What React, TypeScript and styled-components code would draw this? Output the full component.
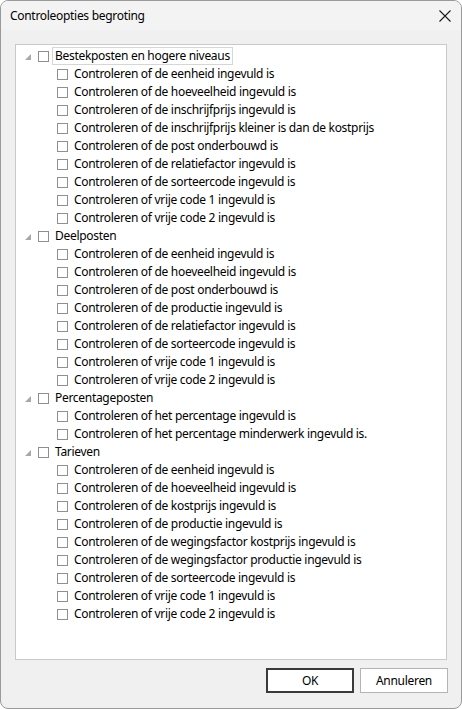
import React from "react";
import styled, { createGlobalStyle } from "styled-components";

const GlobalStyle = createGlobalStyle`
  html, body {
    margin: 0;
    padding: 0;
    background: #ffffff;
  }
  * {
    box-sizing: border-box;
  }
`;

interface TreeGroup {
  label: string;
  items: string[];
}

const groups: TreeGroup[] = [
  {
    label: "Bestekposten en hogere niveaus",
    items: [
      "Controleren of de eenheid ingevuld is",
      "Controleren of de hoeveelheid ingevuld is",
      "Controleren of de inschrijfprijs ingevuld is",
      "Controleren of de inschrijfprijs kleiner is dan de kostprijs",
      "Controleren of de post onderbouwd is",
      "Controleren of de relatiefactor ingevuld is",
      "Controleren of de sorteercode ingevuld is",
      "Controleren of vrije code 1 ingevuld is",
      "Controleren of vrije code 2 ingevuld is",
    ],
  },
  {
    label: "Deelposten",
    items: [
      "Controleren of de eenheid ingevuld is",
      "Controleren of de hoeveelheid ingevuld is",
      "Controleren of de post onderbouwd is",
      "Controleren of de productie ingevuld is",
      "Controleren of de relatiefactor ingevuld is",
      "Controleren of de sorteercode ingevuld is",
      "Controleren of vrije code 1 ingevuld is",
      "Controleren of vrije code 2 ingevuld is",
    ],
  },
  {
    label: "Percentageposten",
    items: [
      "Controleren of het percentage ingevuld is",
      "Controleren of het percentage minderwerk ingevuld is.",
    ],
  },
  {
    label: "Tarieven",
    items: [
      "Controleren of de eenheid ingevuld is",
      "Controleren of de hoeveelheid ingevuld is",
      "Controleren of de kostprijs ingevuld is",
      "Controleren of de productie ingevuld is",
      "Controleren of de wegingsfactor kostprijs ingevuld is",
      "Controleren of de wegingsfactor productie ingevuld is",
      "Controleren of de sorteercode ingevuld is",
      "Controleren of vrije code 1 ingevuld is",
      "Controleren of vrije code 2 ingevuld is",
    ],
  },
];

const DialogWindow = styled.div`
  width: 462px;
  height: 709px;
  display: flex;
  flex-direction: column;
  background: #f0f0f0;
  border: 1px solid #9a9a9a;
  border-radius: 8px;
  overflow: hidden;
  font-family: "Noto Sans", "Open Sans", sans-serif;
  font-size: 12px;
  letter-spacing: -0.3px;
  color: #000000;
`;

const TitleBar = styled.div`
  height: 29px;
  flex: none;
  display: flex;
  align-items: center;
  justify-content: space-between;
  padding: 1px 9px 0 9px;
  background: #f3f3f3;
`;

const TitleText = styled.span`
  font-size: 12px;
  line-height: 16px;
`;

const CloseButton = styled.button`
  width: 14px;
  height: 14px;
  padding: 0;
  margin: 0;
  border: none;
  background: transparent;
  display: flex;
  align-items: center;
  justify-content: center;
  cursor: pointer;
`;

const Body = styled.div`
  flex: 1;
  display: flex;
  flex-direction: column;
  padding: 14px 14px 0 14px;
`;

const TreePanel = styled.div`
  flex: 1;
  background: #ffffff;
  border: 1px solid #c9c9c9;
  padding-top: 2px;
`;

const Row = styled.div<{ $level: number }>`
  height: 18px;
  display: flex;
  align-items: center;
  padding-left: ${(p) => 8 + p.$level * 19}px;
  white-space: nowrap;
`;

const Expander = styled.span`
  width: 14px;
  height: 18px;
  flex: none;
  display: flex;
  align-items: center;
  padding-left: 1px;
  padding-top: 2px;
`;

const CheckBox = styled.span`
  width: 11px;
  height: 11px;
  flex: none;
  border: 1px solid #8f8f8f;
  background: #ffffff;
`;

const Label = styled.span<{ $focused?: boolean }>`
  margin-left: 3px;
  height: 18px;
  display: flex;
  align-items: center;
  padding: 0 2px;
  border: 1px solid ${(p) => (p.$focused ? "#d6d6d6" : "transparent")};
  line-height: 16px;
`;

const Footer = styled.div`
  height: 48px;
  flex: none;
  display: flex;
  justify-content: flex-end;
  align-items: flex-start;
  gap: 6px;
  padding: 8px 13px 0 0;
`;

const DialogButton = styled.button<{ $default?: boolean }>`
  width: 88px;
  height: 25px;
  padding: 0;
  background: #ffffff;
  border: ${(p) => (p.$default ? "2px solid #3a3a3a" : "1px solid #b4b4b4")};
  font-family: "Noto Sans", "Open Sans", sans-serif;
  font-size: 12px;
  letter-spacing: -0.3px;
  color: #000000;
  cursor: pointer;
`;

const ExpandedGlyph = () => (
  <svg width="6" height="6" viewBox="0 0 6 6">
    <polygon points="6,0 6,6 0,6" fill="#a8a8a8" />
  </svg>
);

const CloseGlyph = () => (
  <svg width="12" height="12" viewBox="0 0 12 12">
    <path d="M0.5 0.5 L11.5 11.5 M11.5 0.5 L0.5 11.5" stroke="#1a1a1a" strokeWidth="1.1" />
  </svg>
);

const App: React.FC = () => {
  return (
    <>
      <GlobalStyle />
      <DialogWindow>
        <TitleBar>
          <TitleText>Controleopties begroting</TitleText>
          <CloseButton aria-label="Sluiten">
            <CloseGlyph />
          </CloseButton>
        </TitleBar>
        <Body>
          <TreePanel>
            {groups.map((group, gi) => (
              <React.Fragment key={group.label}>
                <Row $level={0}>
                  <Expander>
                    <ExpandedGlyph />
                  </Expander>
                  <CheckBox />
                  <Label $focused={gi === 0}>{group.label}</Label>
                </Row>
                {group.items.map((item, ii) => (
                  <Row $level={1} key={ii}>
                    <Expander />
                    <CheckBox />
                    <Label>{item}</Label>
                  </Row>
                ))}
              </React.Fragment>
            ))}
          </TreePanel>
        </Body>
        <Footer>
          <DialogButton $default>OK</DialogButton>
          <DialogButton>Annuleren</DialogButton>
        </Footer>
      </DialogWindow>
    </>
  );
};

export default App;
